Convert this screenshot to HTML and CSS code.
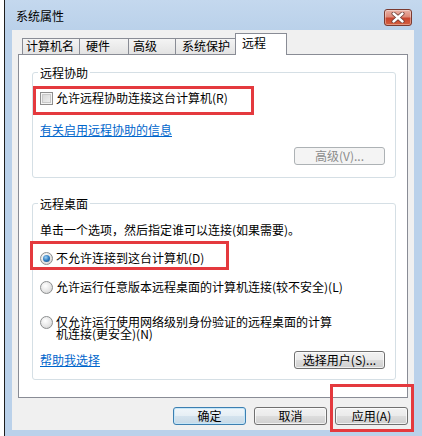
FILE: index.html
```html
<!DOCTYPE html>
<html lang="zh-CN">
<head>
<meta charset="utf-8">
<title>系统属性</title>
<link rel="stylesheet" href="styles.css">
</head>
<body>
<div class="screen">
  <div class="window">
    <div class="titlebar">
      <span class="title">系统属性</span>
      <span class="close">
        <svg width="14" height="11" viewBox="0 0 14 11">
          <path d="M2.5 1.5 L11.5 9.5 M11.5 1.5 L2.5 9.5" stroke="#6a3a33" stroke-width="4" stroke-linecap="round" fill="none"/>
          <path d="M2.5 1.5 L11.5 9.5 M11.5 1.5 L2.5 9.5" stroke="#ffffff" stroke-width="2.4" stroke-linecap="round" fill="none"/>
        </svg>
      </span>
    </div>
    <div class="client">
      <div class="tabs">
        <div class="tab tab-name">计算机名</div>
        <div class="tab tab-hw">硬件</div>
        <div class="tab tab-adv">高级</div>
        <div class="tab tab-prot">系统保护</div>
        <div class="tab tab-remote active">远程</div>
      </div>
      <div class="panel">
        <fieldset class="group group-assist">
          <legend>远程协助</legend>
          <div class="option check-row">
            <span class="checkbox"></span>
            <span class="opt-text">允许远程协助连接这台计算机(R)</span>
          </div>
          <div class="link-row"><a class="link">有关启用远程协助的信息</a></div>
          <div class="btn-row"><span class="btn btn-wide disabled">高级(V)...</span></div>
        </fieldset>
        <fieldset class="group group-desktop">
          <legend>远程桌面</legend>
          <div class="desc">单击一个选项，然后指定谁可以连接(如果需要)。</div>
          <div class="option radio-row r1">
            <span class="radio checked"></span>
            <span class="opt-text">不允许连接到这台计算机(D)</span>
          </div>
          <div class="option radio-row r2">
            <span class="radio"></span>
            <span class="opt-text">允许运行任意版本远程桌面的计算机连接(较不安全)(L)</span>
          </div>
          <div class="option radio-row r3">
            <span class="radio"></span>
            <span class="opt-text wrap">仅允许运行使用网络级别身份验证的远程桌面的计算机连接(更安全)(N)</span>
          </div>
          <div class="split-row">
            <a class="link">帮助我选择</a>
            <span class="btn btn-wide">选择用户(S)...</span>
          </div>
        </fieldset>
      </div>
      <div class="actions">
        <span class="btn default">确定</span>
        <span class="btn">取消</span>
        <span class="btn">应用(A)</span>
      </div>
    </div>
  </div>
  <div class="mark mark-assist"></div>
  <div class="mark mark-deny"></div>
  <div class="mark mark-apply"></div>
</div>
</body>
</html>
```
FILE: styles.css
```css
* { box-sizing: border-box; }
html, body { margin: 0; padding: 0; }
body {
  background: #fff;
  font-family: "Noto Sans CJK SC", "Noto Sans", sans-serif;
  font-size: 12px;
  color: #000;
}
.screen {
  position: relative;
  width: 422px;
  height: 436px;
  overflow: hidden;
  background: #fff;
}
.window {
  margin-left: 4px;
  width: 418px;
  height: 436px;
  border-left: 1px solid #1e1e1e;
  background: #bad1ea;
  padding: 0 8px 6px 7px;
  display: flex;
  flex-direction: column;
}
.titlebar {
  height: 30px;
  flex: none;
  margin: 0 -8px 0 -7px;
  padding: 9px 10px 0 11px;
  display: flex;
  justify-content: space-between;
  align-items: flex-start;
  background: linear-gradient(#c4d8ee, #bad1ea);
}
.title { line-height: 14px; }
.close {
  width: 28px;
  height: 17px;
  border: 1px solid #7a3a30;
  border-radius: 3px;
  background: linear-gradient(#eab2a6 0%, #dd8a79 45%, #c9452f 55%, #d4603f 100%);
  display: flex;
  align-items: center;
  justify-content: center;
  box-shadow: inset 0 0 0 1px rgba(255,255,255,0.35);
}
.close svg { display: block; }
.client {
  height: 400px;
  flex: none;
  background: #f0f0f0;
  display: flex;
  flex-direction: column;
}
.tabs {
  height: 24px;
  padding: 3px 0 0 10px;
  display: flex;
  align-items: flex-end;
  position: relative;
  z-index: 1;
}
.tab {
  height: 16px;
  border: 1px solid #898c95;
  border-bottom: none;
  margin-right: -1px;
  background: linear-gradient(#f4f4f4, #e3e3e3);
  line-height: 13px;
  white-space: nowrap;
}
.tab-name { width: 58px; padding-left: 3px; }
.tab-hw { width: 50px; padding-left: 6px; }
.tab-adv { width: 48px; padding-left: 4px; }
.tab-prot { width: 61px; padding-left: 6px; }
.tab-remote { width: 52px; padding-left: 6px; }
.tab.active {
  height: 22px;
  margin-bottom: -1px;
  background: #fff;
  padding-top: 2px;
  line-height: 14px;
  position: relative;
}
.panel {
  height: 344px;
  flex: none;
  margin: 0 6px;
  border: 1px solid #898c95;
  background: #fff;
  display: flex;
  flex-direction: column;
}
.group {
  margin: 0 11px 0 13px;
  padding: 0 10px 0 7px;
  border: 1px solid #d5dfe5;
  border-radius: 3px;
  min-width: 0;
}
.group legend {
  padding: 0 2px;
  margin-left: -2px;
  line-height: 13px;
}
.group-assist { margin-top: 11px; padding-bottom: 12px; }
.group-desktop { margin-top: 19px; padding-bottom: 10px; }
.option {
  display: flex;
  align-items: flex-start;
  line-height: 14px;
}
.opt-text { margin-left: 3px; }
.check-row { margin-top: 12px; }
.checkbox {
  width: 13px;
  height: 13px;
  margin-top: 1px;
  flex: none;
  border: 1px solid #8f8f8f;
  background: linear-gradient(135deg, #d2d2d2, #f5f5f5);
  box-shadow: inset 0 0 0 1px #f4f4f4, inset 0 0 0 2px #c9c9c9;
}
.radio {
  width: 13px;
  height: 13px;
  margin-top: 1px;
  flex: none;
  border: 1px solid #8c8e8f;
  border-radius: 50%;
  background: radial-gradient(circle at 40% 35%, #ffffff 0%, #e6e6e6 55%, #c8c8c8 100%);
  display: flex;
  align-items: center;
  justify-content: center;
}
.radio.checked::after {
  content: "";
  width: 7px;
  height: 7px;
  border-radius: 50%;
  background: radial-gradient(circle at 40% 35%, #9fd2f5 0%, #2f7cc0 50%, #174a85 100%);
}
.link-row { margin-top: 18px; line-height: 14px; }
.link {
  color: #0066cc;
  text-decoration: underline;
  line-height: 14px;
}
.btn-row {
  margin-top: 10px;
  display: flex;
  justify-content: flex-end;
}
.btn {
  width: 73px;
  height: 18px;
  border: 1px solid #707070;
  border-radius: 3px;
  background: linear-gradient(#f2f2f2 0%, #ebebeb 48%, #dddddd 52%, #cfcfcf 100%);
  box-shadow: inset 0 0 0 1px rgba(255,255,255,0.7);
  display: flex;
  align-items: center;
  justify-content: center;
  line-height: 14px;
  white-space: nowrap;
}
.btn-wide { width: 91px; }
.btn.disabled {
  border-color: #adb2b5;
  background: #f4f4f4;
  box-shadow: none;
  color: #8b8b8b;
}
.btn.default {
  border-color: #3c7fb1;
  background: linear-gradient(#f0f6fa 0%, #e6eff5 48%, #d4e3ee 52%, #c7d9e6 100%);
  box-shadow: inset 0 0 0 1px #c5e6f8;
}
.desc { margin-top: 13px; line-height: 14px; }
.r1 { margin-top: 14px; }
.r2 { margin-top: 15px; }
.r3 { margin-top: 22px; line-height: 12px; }
.r3 .radio { margin-top: 0; }
.wrap { width: 282px; }
.split-row {
  margin-top: 11px;
  display: flex;
  justify-content: space-between;
  align-items: center;
  height: 18px;
}
.actions {
  margin-top: 9px;
  padding-right: 6px;
  display: flex;
  justify-content: flex-end;
  gap: 8px;
}
.mark {
  position: absolute;
  border: 3px solid #e4393e;
}
.mark-assist { left: 33px; top: 86px; width: 221px; height: 29px; }
.mark-deny { left: 30px; top: 241px; width: 199px; height: 29px; }
.mark-apply { left: 330px; top: 384px; width: 84px; height: 48px; }
```
